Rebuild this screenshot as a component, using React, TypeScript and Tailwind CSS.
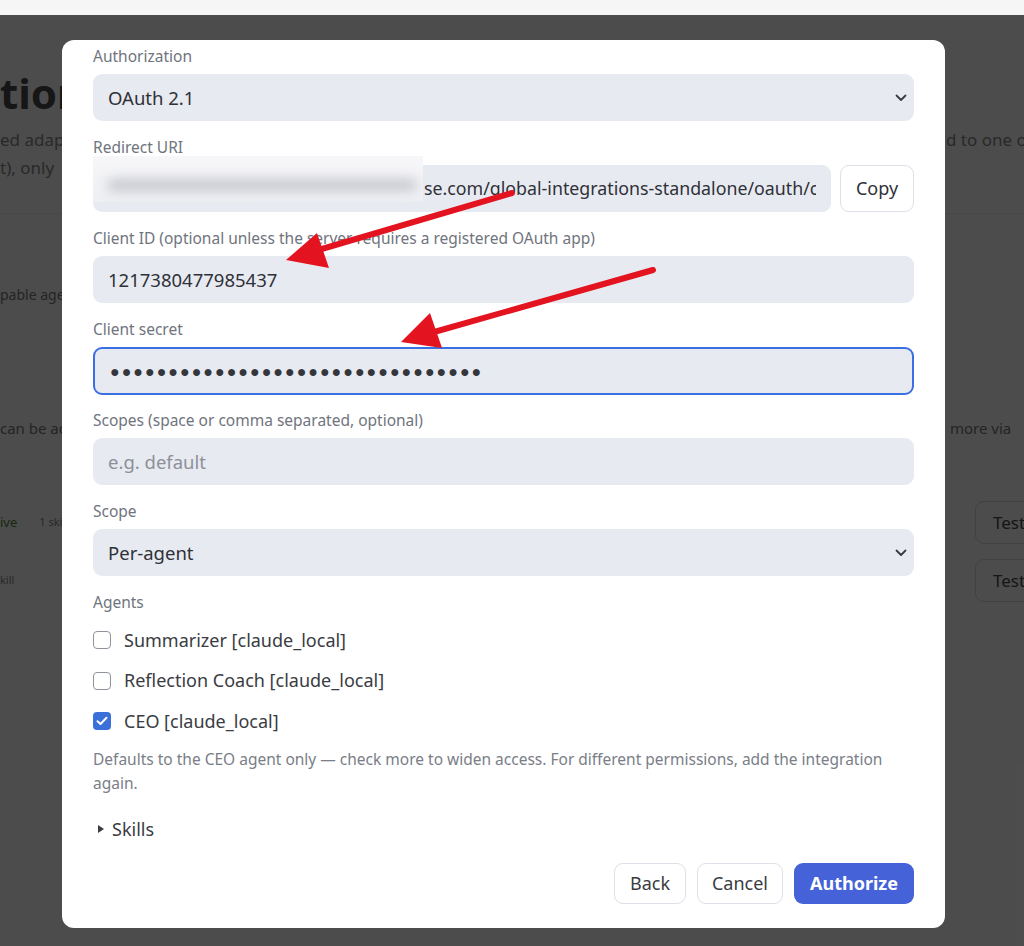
import React from "react";

const font = { fontFamily: '"Noto Sans", "Open Sans", Arial, sans-serif' };

function Chevron() {
  return (
    <svg width="12" height="8" viewBox="0 0 12 8" className="text-[#3a3c42]">
      <polyline points="1.5,1.5 6,6 10.5,1.5" fill="none" stroke="currentColor" strokeWidth="1.8" strokeLinecap="round" strokeLinejoin="round" />
    </svg>
  );
}

function Label({ children }: { children: React.ReactNode }) {
  return <div className="text-[15.5px] leading-[20px] text-[#70747d]">{children}</div>;
}

function SelectBox({ value }: { value: string }) {
  return (
    <div className="mt-2 h-[47px] rounded-[9px] bg-[#e8eaf1] pl-[15px] pr-[7px] flex items-center justify-between text-[18.5px] text-[#2f3138]">
      <span>{value}</span>
      <Chevron />
    </div>
  );
}

function Checkbox({ checked, label }: { checked?: boolean; label: string }) {
  return (
    <div className="h-[28px] flex items-center gap-[13px]">
      {checked ? (
        <div className="w-[18px] h-[18px] rounded-[4px] bg-[#3b6fd9] flex items-center justify-center">
          <svg width="12" height="10" viewBox="0 0 12 10">
            <polyline points="1.5,5.2 4.5,8 10.5,1.8" fill="none" stroke="white" strokeWidth="2" strokeLinecap="round" strokeLinejoin="round" />
          </svg>
        </div>
      ) : (
        <div className="w-[18px] h-[18px] rounded-[4px] border border-[#8f949c] bg-white" />
      )}
      <span className="text-[18px] text-[#3a3c42]">{label}</span>
    </div>
  );
}

export default function App() {
  return (
    <div className="relative w-[1024px] h-[946px] overflow-hidden bg-white" style={font}>
      {/* page behind the dialog */}
      <div className="h-[15px] bg-[#f6f6f6]" />
      <div className="relative h-[931px] bg-white text-[#5a5a5a]">
        <div className="pt-[55px]">
          <div className="flex h-[46px] items-center">
            <div className="w-[946px] shrink-0 whitespace-nowrap overflow-hidden text-[42px] font-bold text-[#4a4a4a] leading-[46px]">tions</div>
          </div>
          <div className="mt-[12px] flex h-[24px] items-center text-[17px] text-[#8a8a8a]">
            <div className="w-[946px] shrink-0 whitespace-nowrap overflow-hidden">ed adapters are listed here</div>
            <div className="flex-1 whitespace-nowrap overflow-hidden">d to one or more</div>
          </div>
          <div className="mt-[4px] flex h-[24px] items-center text-[17px] text-[#8a8a8a]">
            <div className="w-[946px] shrink-0 whitespace-nowrap overflow-hidden">t), only</div>
          </div>
          <div className="mt-[33px] border-t border-[#ededed]" />
          <div className="mt-[68px] flex h-[24px] items-center text-[14px] text-[#7a7a7a]">
            <div className="w-[946px] shrink-0 whitespace-nowrap overflow-hidden">pable agents</div>
          </div>
          <div className="mt-[110px] flex h-[24px] items-center text-[15px] text-[#7a7a7a]">
            <div className="w-[946px] shrink-0 whitespace-nowrap overflow-hidden">can be added</div>
            <div className="flex-1 whitespace-nowrap overflow-hidden pl-[4px]">more via</div>
          </div>
          <div className="mt-[61px] flex h-[43px] items-center">
            <div className="w-[975px] shrink-0 whitespace-nowrap overflow-hidden flex items-center gap-[22px]">
              <span className="text-[13px] text-[#4e8a3e]">ive</span>
              <span className="text-[11px] text-[#8a8a8a]">1 skill</span>
            </div>
            <div className="h-[43px] w-[70px] shrink-0 rounded-l-[9px] border border-[#dadada] pl-[17px] flex items-center text-[17px] text-[#4a4a4a]">Test</div>
          </div>
          <div className="mt-[15px] flex h-[43px] items-center">
            <div className="w-[975px] shrink-0 whitespace-nowrap overflow-hidden text-[11px] text-[#8a8a8a]">kill</div>
            <div className="h-[43px] w-[70px] shrink-0 rounded-l-[9px] border border-[#dadada] pl-[17px] flex items-center text-[17px] text-[#4a4a4a]">Test</div>
          </div>
        </div>
        <div className="absolute inset-0 bg-black/70" />
      </div>

      {/* dialog */}
      <div className="absolute left-[62px] top-[40px] w-[883px] bg-white rounded-[12px] px-[31px] pt-[6px] pb-[24px]">
        <Label>Authorization</Label>
        <SelectBox value="OAuth 2.1" />

        <div className="mt-[16px]">
          <Label>Redirect URI</Label>
          <div className="mt-2 flex gap-[9px]">
            <div className="relative flex-1 h-[47px] rounded-[9px] bg-[#e8eaf1] px-[15px] flex items-center overflow-hidden whitespace-nowrap text-[17.8px] text-[#2f3138]">
              <span className="inline-block w-[316px] shrink-0" />
              <span>se.com/global-integrations-standalone/oauth/callback</span>
              <div className="absolute right-0 top-0 bottom-0 w-[15px] bg-[#e8eaf1]" />
            </div>
            <button className="w-[74px] h-[47px] rounded-[9px] border border-[#dde0e8] bg-white text-[18px] text-[#2f3138]">Copy</button>
          </div>
        </div>

        <div className="mt-[16px]">
          <Label>Client ID (optional unless the server requires a registered OAuth app)</Label>
          <div className="mt-2 h-[47px] rounded-[9px] bg-[#e8eaf1] px-[15px] flex items-center text-[18.5px] text-[#2f3138]">1217380477985437</div>
        </div>

        <div className="mt-[16px]">
          <Label>Client secret</Label>
          <div className="mt-2 h-[48px] rounded-[9px] bg-[#e8eaf1] border-2 border-[#3b6fe4] px-[15px] flex items-center text-[16px] tracking-[2px] text-[#34363c]">
            {"\u25CF".repeat(32)}
          </div>
        </div>

        <div className="mt-[15px]">
          <Label>Scopes (space or comma separated, optional)</Label>
          <div className="mt-2 h-[47px] rounded-[9px] bg-[#e8eaf1] px-[15px] flex items-center text-[18.5px] text-[#8d9098]">e.g. default</div>
        </div>

        <div className="mt-[16px]">
          <Label>Scope</Label>
          <SelectBox value="Per-agent" />
        </div>

        <div className="mt-[16px]">
          <Label>Agents</Label>
          <div className="mt-[14px] flex flex-col gap-[12.5px]">
            <Checkbox label="Summarizer [claude_local]" />
            <Checkbox label="Reflection Coach [claude_local]" />
            <Checkbox checked label="CEO [claude_local]" />
          </div>
        </div>

        <p className="mt-[12px] text-[15.5px] leading-[24px] text-[#7a7e87]">
          Defaults to the CEO agent only — check more to widen access. For different permissions, add the integration again.
        </p>

        <div className="mt-[24px] h-[20px] flex items-center gap-[8px] pl-[5px]">
          <svg width="6" height="8" viewBox="0 0 6 8">
            <polygon points="0,0 6,4 0,8" fill="#3a3c42" />
          </svg>
          <span className="text-[18px] text-[#3a3c42]">Skills</span>
        </div>

        <div className="mt-[24px] flex justify-end gap-[11px]">
          <button className="h-[41px] w-[72px] rounded-[9px] border border-[#dde0e8] bg-white text-[18px] text-[#3a3c42]">Back</button>
          <button className="h-[41px] w-[86px] rounded-[9px] border border-[#dde0e8] bg-white text-[18px] text-[#3a3c42]">Cancel</button>
          <button className="h-[41px] w-[120px] rounded-[9px] bg-[#4562d8] text-[18px] font-bold text-white">Authorize</button>
        </div>

        {/* redacted start of the redirect URI */}
        <div className="absolute left-[31px] top-[116px] w-[330px] h-[46px] bg-gradient-to-b from-[#f7f7f9] to-[#eeeff3] overflow-hidden">
          <div className="absolute left-[14px] right-[6px] top-[23px] h-[12px] rounded-full bg-[#c6c8ce] blur-[6px]" />
        </div>
      </div>

      {/* annotation arrows */}
      <svg className="absolute inset-0 pointer-events-none" width="1024" height="946" viewBox="0 0 1024 946">
        <line x1="512" y1="193" x2="305" y2="254" stroke="#e3131f" strokeWidth="6" strokeLinecap="round" />
        <polygon points="286,260 317,233 329,268" fill="#e3131f" />
        <line x1="653" y1="270" x2="420" y2="336" stroke="#e3131f" strokeWidth="6" strokeLinecap="round" />
        <polygon points="401,342 430,313 442,348" fill="#e3131f" />
      </svg>
    </div>
  );
}
